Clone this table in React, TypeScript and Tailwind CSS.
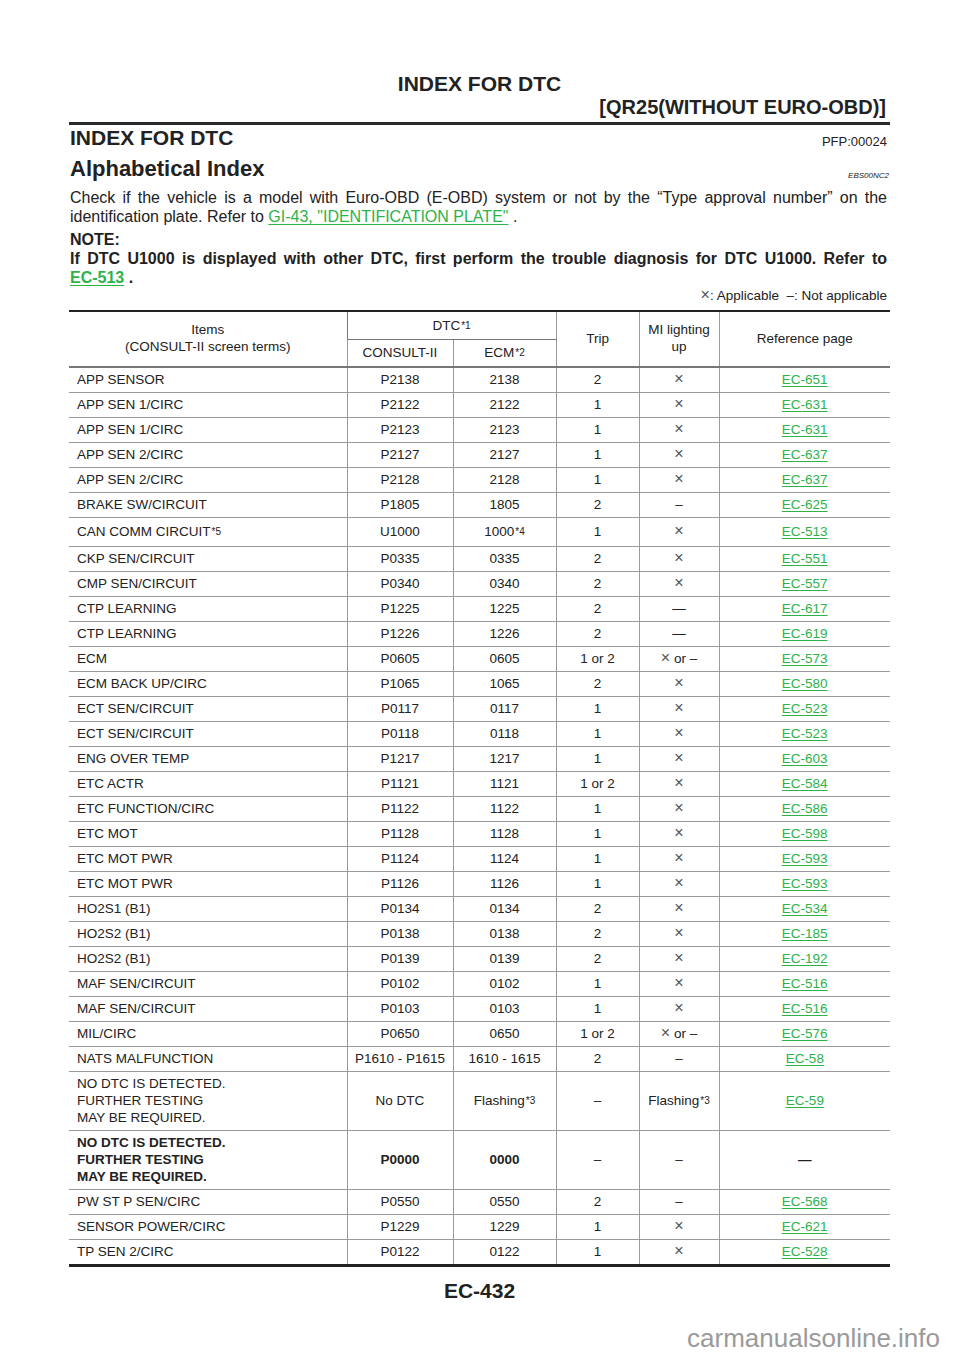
import React from 'react';

type Row = {
  item: React.ReactNode;
  consult: React.ReactNode;
  ecm: React.ReactNode;
  trip: string;
  mil: string;
  ref: string;
  h?: string;
  bold?: boolean;
};

const Sup = ({ children }: { children: React.ReactNode }) => (
  <sup className="text-[10px] relative -top-[1px] ml-[1px]">{children}</sup>
);

const X = '×';

const ROWS: Row[] = [
  { item: 'APP SENSOR', consult: 'P2138', ecm: '2138', trip: '2', mil: X, ref: 'EC-651' },
  { item: 'APP SEN 1/CIRC', consult: 'P2122', ecm: '2122', trip: '1', mil: X, ref: 'EC-631' },
  { item: 'APP SEN 1/CIRC', consult: 'P2123', ecm: '2123', trip: '1', mil: X, ref: 'EC-631' },
  { item: 'APP SEN 2/CIRC', consult: 'P2127', ecm: '2127', trip: '1', mil: X, ref: 'EC-637' },
  { item: 'APP SEN 2/CIRC', consult: 'P2128', ecm: '2128', trip: '1', mil: X, ref: 'EC-637' },
  { item: 'BRAKE SW/CIRCUIT', consult: 'P1805', ecm: '1805', trip: '2', mil: '–', ref: 'EC-625' },
  {
    item: <>CAN COMM CIRCUIT<Sup>*5</Sup></>,
    consult: 'U1000',
    ecm: <>1000<Sup>*4</Sup></>,
    trip: '1', mil: X, ref: 'EC-513', h: 'h-[29px]',
  },
  { item: 'CKP SEN/CIRCUIT', consult: 'P0335', ecm: '0335', trip: '2', mil: X, ref: 'EC-551' },
  { item: 'CMP SEN/CIRCUIT', consult: 'P0340', ecm: '0340', trip: '2', mil: X, ref: 'EC-557' },
  { item: 'CTP LEARNING', consult: 'P1225', ecm: '1225', trip: '2', mil: '—', ref: 'EC-617' },
  { item: 'CTP LEARNING', consult: 'P1226', ecm: '1226', trip: '2', mil: '—', ref: 'EC-619' },
  { item: 'ECM', consult: 'P0605', ecm: '0605', trip: '1 or 2', mil: '× or –', ref: 'EC-573' },
  { item: 'ECM BACK UP/CIRC', consult: 'P1065', ecm: '1065', trip: '2', mil: X, ref: 'EC-580' },
  { item: 'ECT SEN/CIRCUIT', consult: 'P0117', ecm: '0117', trip: '1', mil: X, ref: 'EC-523' },
  { item: 'ECT SEN/CIRCUIT', consult: 'P0118', ecm: '0118', trip: '1', mil: X, ref: 'EC-523' },
  { item: 'ENG OVER TEMP', consult: 'P1217', ecm: '1217', trip: '1', mil: X, ref: 'EC-603' },
  { item: 'ETC ACTR', consult: 'P1121', ecm: '1121', trip: '1 or 2', mil: X, ref: 'EC-584' },
  { item: 'ETC FUNCTION/CIRC', consult: 'P1122', ecm: '1122', trip: '1', mil: X, ref: 'EC-586' },
  { item: 'ETC MOT', consult: 'P1128', ecm: '1128', trip: '1', mil: X, ref: 'EC-598' },
  { item: 'ETC MOT PWR', consult: 'P1124', ecm: '1124', trip: '1', mil: X, ref: 'EC-593' },
  { item: 'ETC MOT PWR', consult: 'P1126', ecm: '1126', trip: '1', mil: X, ref: 'EC-593' },
  { item: 'HO2S1 (B1)', consult: 'P0134', ecm: '0134', trip: '2', mil: X, ref: 'EC-534' },
  { item: 'HO2S2 (B1)', consult: 'P0138', ecm: '0138', trip: '2', mil: X, ref: 'EC-185' },
  { item: 'HO2S2 (B1)', consult: 'P0139', ecm: '0139', trip: '2', mil: X, ref: 'EC-192' },
  { item: 'MAF SEN/CIRCUIT', consult: 'P0102', ecm: '0102', trip: '1', mil: X, ref: 'EC-516' },
  { item: 'MAF SEN/CIRCUIT', consult: 'P0103', ecm: '0103', trip: '1', mil: X, ref: 'EC-516' },
  { item: 'MIL/CIRC', consult: 'P0650', ecm: '0650', trip: '1 or 2', mil: '× or –', ref: 'EC-576' },
  { item: 'NATS MALFUNCTION', consult: 'P1610 - P1615', ecm: '1610 - 1615', trip: '2', mil: '–', ref: 'EC-58' },
  {
    item: <>NO DTC IS DETECTED.<br />FURTHER TESTING<br />MAY BE REQUIRED.</>,
    consult: 'No DTC',
    ecm: <>Flashing<Sup>*3</Sup></>,
    trip: '–',
    mil: 'Flashing*3',
    ref: 'EC-59',
    h: 'h-[59px]',
  },
  {
    item: <>NO DTC IS DETECTED.<br />FURTHER TESTING<br />MAY BE REQUIRED.</>,
    consult: 'P0000',
    ecm: '0000',
    trip: '–',
    mil: '–',
    ref: '—',
    h: 'h-[59px]',
    bold: true,
  },
  { item: 'PW ST P SEN/CIRC', consult: 'P0550', ecm: '0550', trip: '2', mil: '–', ref: 'EC-568' },
  { item: 'SENSOR POWER/CIRC', consult: 'P1229', ecm: '1229', trip: '1', mil: X, ref: 'EC-621' },
  { item: 'TP SEN 2/CIRC', consult: 'P0122', ecm: '0122', trip: '1', mil: X, ref: 'EC-528' },
];

const Link = ({ children }: { children: React.ReactNode }) => (
  <span className="text-[#2eb24a] underline underline-offset-2 decoration-1 whitespace-nowrap">{children}</span>
);

const Cross = () => <span className="text-[#555] text-[16px] leading-none font-light">×</span>;

function MilCell({ v }: { v: string }) {
  if (v === 'Flashing*3') return <>Flashing<Sup>*3</Sup></>;
  if (v === X) return <Cross />;
  if (v === '× or –') return <><Cross /> or –</>;
  return <>{v}</>;
}

export default function App() {
  const cellL = 'border-l border-[#9a9a9a]';
  return (
    <div className="min-h-[1358px] bg-white text-[#222] font-['Liberation_Sans',Arial,sans-serif] overflow-hidden">
      <div className="ml-[69px] w-[821px] pt-[72px]">
        {/* Page header */}
        <div className="text-center font-bold text-[21px] leading-[24px]">INDEX FOR DTC</div>
        <div className="text-right font-bold text-[20px] leading-[22px] pr-[4px]">[QR25(WITHOUT EURO-OBD)]</div>
        <div className="mt-[4px] h-[3px] bg-[#2a2a2a]" />

        {/* Section headings */}
        <div className="flex items-end justify-between h-[26px]">
          <span className="font-bold text-[21px] leading-[26px] pl-[1px]">INDEX FOR DTC</span>
          <span className="text-[13px] leading-[16px] mb-[1px] pr-[3px]">PFP:00024</span>
        </div>
        <div className="mt-[5px] flex items-end justify-between h-[26px]">
          <span className="font-bold text-[22px] leading-[26px] pl-[1px]">Alphabetical Index</span>
          <span className="italic text-[8px] leading-[10px] mb-[1px] pr-[1px]">EBS00NC2</span>
        </div>

        {/* Body text */}
        <p className="mt-[6px] text-[16px] leading-[19px] pl-[1px] pr-[3px] text-justify">
          Check if the vehicle is a model with Euro-OBD (E-OBD) system or not by the “Type approval number” on the identification plate. Refer to <Link>GI-43, "IDENTIFICATION PLATE"</Link> .
        </p>
        <div className="mt-[4px] font-bold text-[16px] leading-[19px] pl-[1px] pr-[3px]">
          <div>NOTE:</div>
          <div className="text-justify">
            If DTC U1000 is displayed with other DTC, first perform the trouble diagnosis for DTC U1000. Refer to <Link>EC-513</Link> .
          </div>
        </div>
        <div className="h-[16px] text-right text-[13.5px] leading-[16px] pr-[3px]">
          <Cross />: Applicable &nbsp;–: Not applicable
        </div>

        {/* Table */}
        <div className="mt-[7px] border-t-[2px] border-b-[3px] border-[#222]">
          <table className="w-full table-fixed border-collapse text-[13.5px] leading-[17px]">
            <colgroup>
              <col className="w-[278px]" />
              <col className="w-[106px]" />
              <col className="w-[103px]" />
              <col className="w-[83px]" />
              <col className="w-[80px]" />
              <col />
            </colgroup>
            <thead>
              <tr className="h-[27px]">
                <th rowSpan={2} className="font-normal text-center align-middle border-b-2 border-[#777] pb-[2px]">
                  Items<br />(CONSULT-II screen terms)
                </th>
                <th colSpan={2} className={`font-normal text-center border-b border-[#777] ${cellL}`}>
                  DTC<Sup>*1</Sup>
                </th>
                <th rowSpan={2} className={`font-normal text-center border-b-2 border-b-[#777] pb-[2px] ${cellL}`}>Trip</th>
                <th rowSpan={2} className={`font-normal text-center border-b-2 border-b-[#777] pb-[2px] ${cellL}`}>
                  MI lighting<br />up
                </th>
                <th rowSpan={2} className={`font-normal text-center border-b-2 border-b-[#777] pb-[2px] ${cellL}`}>Reference page</th>
              </tr>
              <tr className="h-[28px]">
                <th className={`font-normal text-center border-b-2 border-b-[#777] ${cellL}`}>CONSULT-II</th>
                <th className={`font-normal text-center border-b-2 border-b-[#777] ${cellL}`}>
                  ECM<Sup>*2</Sup>
                </th>
              </tr>
            </thead>
            <tbody>
              {ROWS.map((r, i) => {
                const last = i === ROWS.length - 1;
                const rb = last ? '' : 'border-b border-b-[#9a9a9a]';
                const w = r.bold ? 'font-bold' : '';
                return (
                  <tr key={i} className={r.h ?? 'h-[25px]'}>
                    <td className={`pl-[8px] text-left align-middle ${rb} ${w}`}>{r.item}</td>
                    <td className={`text-center ${cellL} ${rb} ${w}`}>{r.consult}</td>
                    <td className={`text-center ${cellL} ${rb} ${w}`}>{r.ecm}</td>
                    <td className={`text-center ${cellL} ${rb}`}>{r.trip}</td>
                    <td className={`text-center ${cellL} ${rb}`}>
                      <MilCell v={r.mil} />
                    </td>
                    <td className={`text-center ${cellL} ${rb}`}>
                      {r.ref.startsWith('EC') ? <Link>{r.ref}</Link> : <span className="font-bold">{r.ref}</span>}
                    </td>
                  </tr>
                );
              })}
            </tbody>
          </table>
        </div>

        {/* Page number */}
        <div className="mt-[12px] text-center font-bold text-[21px] leading-[24px]">EC-432</div>
      </div>

      {/* Watermark */}
      <div className="mt-[20px] text-right pr-[20px] text-[26px] leading-[30px] text-[#9a9a9a]">
        carmanualsonline.info
      </div>
    </div>
  );
}
